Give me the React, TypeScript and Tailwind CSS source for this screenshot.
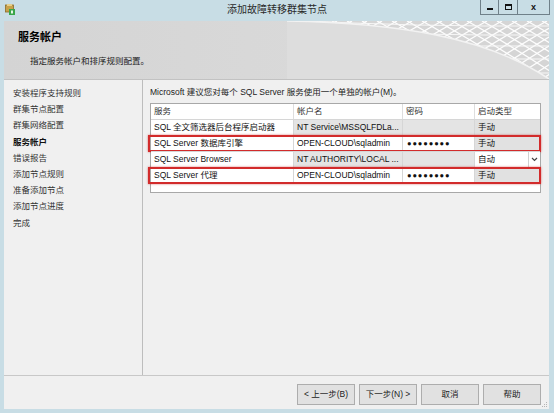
import React from 'react';

const FONT = '"Liberation Sans", "Noto Sans CJK SC", sans-serif';

const navItems = [
  { label: '安装程序支持规则' },
  { label: '群集节点配置' },
  { label: '群集网络配置' },
  { label: '服务帐户', active: true },
  { label: '错误报告' },
  { label: '添加节点规则' },
  { label: '准备添加节点' },
  { label: '添加节点进度' },
  { label: '完成' },
];

interface Row {
  service: string;
  account: string;
  password: string;
  startup: string;
  accountGray: boolean;
  passGray: boolean;
  startGray: boolean;
  dropdown?: boolean;
  marked?: boolean;
}

const rows: Row[] = [
  { service: 'SQL 全文筛选器后台程序启动器', account: 'NT Service\\MSSQLFDLa...', password: '', startup: '手动', accountGray: true, passGray: true, startGray: true },
  { service: 'SQL Server 数据库引擎', account: 'OPEN-CLOUD\\sqladmin', password: '●●●●●●●●', startup: '手动', accountGray: false, passGray: false, startGray: true, marked: true },
  { service: 'SQL Server Browser', account: 'NT AUTHORITY\\LOCAL ...', password: '', startup: '自动', accountGray: true, passGray: true, startGray: false, dropdown: true },
  { service: 'SQL Server 代理', account: 'OPEN-CLOUD\\sqladmin', password: '●●●●●●●●', startup: '手动', accountGray: false, passGray: false, startGray: true, marked: true },
];

// decorative white lattice in the header's right side
const HeaderMesh: React.FC = () => {
  const lines = Array.from({ length: 24 }, (_, i) => i * 15 - 90);
  const curve = 'M0,0 C110,2 200,16 262,58';
  return (
    <svg className="absolute right-0 top-0 block" width={262} height={58} viewBox="0 0 262 58">
      <path d={curve + ' L262,0 Z'} fill="#d5d5d5" />
      {lines.map((x) => (
        <path key={'a' + x} d={`M${x},0 Q${x + 40},22 ${x + 95},58`} stroke="#fdfdfd" strokeWidth={1.3} fill="none" />
      ))}
      {lines.map((x) => (
        <path key={'b' + x} d={`M${x + 95},0 Q${x + 55},22 ${x},58`} stroke="#fdfdfd" strokeWidth={1.3} fill="none" />
      ))}
      {[5, 14, 25, 38, 52].map((y) => (
        <path key={'h' + y} d={`M0,${y - 6} Q130,${y + 1} 262,${y}`} stroke="#f7f7f7" strokeWidth={1} fill="none" />
      ))}
      {/* cover the lattice below the sweeping curve */}
      <path d={curve + ' L0,58 Z'} fill="#dddddd" />
      <path d={curve} stroke="#f2f2f2" strokeWidth={1.5} fill="none" />
    </svg>
  );
};

export default function App() {
  return (
    <div
      className="w-[554px] h-[413px] bg-[#c8dde5] flex flex-col overflow-hidden text-[#1e1e1e]"
      style={{ fontFamily: FONT }}
    >
      {/* Title bar */}
      <div className="relative h-[21px] flex items-start shrink-0">
        <svg className="ml-[5px] mt-[4px]" width="10" height="11" viewBox="0 0 10 11">
          <rect x="0.5" y="1" width="8" height="7" fill="#c8a24a" stroke="#8a6a2a" strokeWidth="0.8" />
          <rect x="2" y="0" width="5" height="2" fill="#e6cf8a" />
          <rect x="4" y="5" width="6" height="6" fill="#3aa64a" />
          <rect x="6" y="6.5" width="2" height="3" fill="#e8f5e8" />
        </svg>
        <div className="absolute left-0 right-0 top-[3px] text-center text-[10px] leading-[14px] text-[#2a2a2a]">
          添加故障转移群集节点
        </div>
        <div className="ml-auto mr-[4px] flex h-[15px] border border-t-0 border-[#6f8089]">
          <div className="w-[17px] flex items-end justify-center pb-[4px]">
            <div className="w-[6px] h-[2px] bg-[#111]" />
          </div>
          <div className="w-[19px] border-l border-[#6f8089] flex items-center justify-center">
            <div className="w-[7px] h-[6px] border border-t-2 border-[#111]" />
          </div>
          <div className="w-[32px] border-l border-[#6f8089] flex items-center justify-center text-[9px] font-bold leading-none text-[#111]">
            x
          </div>
        </div>
      </div>

      {/* Client area */}
      <div className="flex-1 ml-[4px] mr-[5px] mb-[4px] bg-[#f0f0f0] flex flex-col">
        {/* Header */}
        <div className="relative h-[59px] shrink-0 border-b border-[#c2c2c2] bg-gradient-to-r from-[#d4d4d4] to-[#dddddd] overflow-hidden">
          <HeaderMesh />
          <div className="relative pl-[14px] pt-[9px] text-[11px] leading-[14px] font-bold text-black">服务帐户</div>
          <div className="relative pl-[26px] mt-[11px] text-[8.5px] leading-[12px] text-[#222]">指定服务帐户和排序规则配置。</div>
        </div>

        {/* Body */}
        <div className="flex-1 flex min-h-0">
          <div className="w-[139px] shrink-0 border-r border-[#bdbdbd] pl-[9px] pt-[5px]">
            {navItems.map((item) => (
              <div
                key={item.label}
                className={`text-[8.5px] leading-[16.2px] ${item.active ? 'font-bold text-[#111]' : 'text-[#333]'}`}
              >
                {item.label}
              </div>
            ))}
          </div>

          <div className="flex-1 pl-[7px] pr-[8px] pt-[6px]">
            <div className="text-[8.5px] leading-[12px] h-[12px] text-[#222]">
              Microsoft 建议您对每个 SQL Server 服务使用一个单独的帐户(M)。
            </div>
            <div className="mt-[5px] h-[90px] border border-[#a8a8a8] bg-white text-[8.5px]">
              <div className="grid grid-cols-[143px_109px_72px_65px] h-[15px] leading-[15px] text-[#333]">
                <div className="pl-[3px] border-r border-[#dedede]">服务</div>
                <div className="pl-[3px] border-r border-[#dedede]">帐户名</div>
                <div className="pl-[3px] border-r border-[#dedede]">密码</div>
                <div className="pl-[3px]">启动类型</div>
              </div>
              {rows.map((r) => (
                <div
                  key={r.service}
                  className="relative grid grid-cols-[143px_109px_72px_65px] h-[16px] leading-[15px] border-t border-[#d6d6d6] text-[#111]"
                >
                  <div className="pl-[3px] border-r border-[#d6d6d6] bg-white whitespace-nowrap overflow-hidden">{r.service}</div>
                  <div className={`pl-[3px] border-r border-[#d6d6d6] whitespace-nowrap overflow-hidden ${r.accountGray ? 'bg-[#e4e4e4]' : 'bg-white'}`}>
                    {r.account}
                  </div>
                  <div className={`pl-[4px] border-r border-[#d6d6d6] text-[7.5px] tracking-[0.9px] ${r.passGray ? 'bg-[#e4e4e4]' : 'bg-white'}`}>
                    {r.password}
                  </div>
                  {r.dropdown ? (
                    <div className="flex bg-white">
                      <div className="flex-1 pl-[3px]">{r.startup}</div>
                      <div className="w-[12px] border-l border-[#d0d0d0] flex items-center justify-center">
                        <svg width="7" height="5" viewBox="0 0 7 5">
                          <path d="M1,1 L3.5,3.5 L6,1" stroke="#444" strokeWidth="1.2" fill="none" />
                        </svg>
                      </div>
                    </div>
                  ) : (
                    <div className={`pl-[3px] ${r.startGray ? 'bg-[#e1e1e1]' : 'bg-white'}`}>{r.startup}</div>
                  )}
                  {r.marked && (
                    <div className="absolute left-[-3px] right-[-1px] top-[-1px] bottom-[-1px] border-2 border-[#d22b2b] shadow-[0_0_2px_rgba(200,30,30,0.6)] pointer-events-none" />
                  )}
                </div>
              ))}
            </div>
          </div>
        </div>

        {/* Footer */}
        <div className="relative h-[34px] shrink-0 border-t border-[#c8c8c8] flex justify-end gap-[4px] pt-[8px] pr-[8px]">
          {['< 上一步(B)', '下一步(N) >', '取消', '帮助'].map((b) => (
            <div
              key={b}
              className="w-[58px] h-[21px] border border-[#adadad] bg-[#e1e1e1] flex items-center justify-center text-[8.5px] text-[#222]"
            >
              {b}
            </div>
          ))}
          <svg className="absolute right-[1px] bottom-[1px]" width="6" height="6" viewBox="0 0 6 6">
            <rect x="4" y="0" width="1" height="1" fill="#b5b5b5" />
            <rect x="2" y="2" width="1" height="1" fill="#b5b5b5" />
            <rect x="4" y="2" width="1" height="1" fill="#b5b5b5" />
            <rect x="0" y="4" width="1" height="1" fill="#b5b5b5" />
            <rect x="2" y="4" width="1" height="1" fill="#b5b5b5" />
            <rect x="4" y="4" width="1" height="1" fill="#b5b5b5" />
          </svg>
        </div>
      </div>
    </div>
  );
}
